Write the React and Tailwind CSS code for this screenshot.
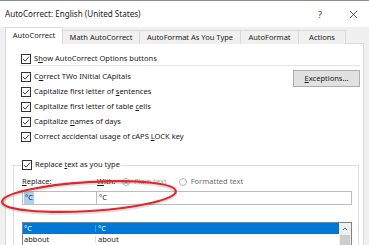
import React from "react";

function Check() {
  return (
    <span className="flex h-[10px] w-[10px] shrink-0 items-center justify-center border border-[#333] bg-white">
      <svg viewBox="0 0 10 10" className="h-[8px] w-[8px]">
        <path d="M1.3 5.1 L3.9 7.7 L8.8 2.1" fill="none" stroke="#222" strokeWidth="1.1" />
      </svg>
    </span>
  );
}

function Row({ children }) {
  return (
    <div className="flex h-[15px] items-center gap-[3px]">
      <Check />
      <span className="whitespace-nowrap">{children}</span>
    </div>
  );
}

function Radio({ on, children, tone }) {
  return (
    <span className="flex items-center gap-[4px]">
      <span className="flex h-[8px] w-[8px] items-center justify-center rounded-full border border-[#b5b5b5] bg-white">
        {on && <span className="h-[4px] w-[4px] rounded-full bg-[#b5b5b5]" />}
      </span>
      <span className={tone}>{children}</span>
    </span>
  );
}

const tabs = [
  { label: "Math AutoCorrect", w: "w-[77px]" },
  { label: "AutoFormat As You Type", w: "w-[101px]" },
  { label: "AutoFormat", w: "w-[58px]" },
  { label: "Actions", w: "w-[47px]" },
];

export default function App() {
  return (
    <div className="relative h-[245px] w-[369px] overflow-hidden bg-[#f0f0f0] font-['Noto_Sans',sans-serif] text-[7.5px] leading-none text-[#1a1a1a]">
      {/* title bar */}
      <div className="flex h-[27px] items-center border-t border-[#8c8c8c] bg-white pl-[5px]">
        <span className="text-[8.1px] text-[#222]">AutoCorrect: English (United States)</span>
        <span className="ml-auto mr-[27px] text-[9px] text-[#333]">?</span>
        <svg viewBox="0 0 10 10" className="mr-[11px] h-[9px] w-[9px]">
          <path d="M1 1 L9 9 M9 1 L1 9" stroke="#333" strokeWidth="0.9" />
        </svg>
      </div>

      {/* tabs */}
      <div className="flex h-[17px] items-end pl-[5px]">
        <div className="relative z-10 flex h-[17px] w-[58px] items-center justify-center border-x border-t border-[#d9d9d9] bg-white pb-[1px]">
          AutoCorrect
        </div>
        {tabs.map((t) => (
          <div
            key={t.label}
            className={`flex h-[14px] ${t.w} items-center justify-center border-r border-t border-[#d9d9d9] bg-[#f0f0f0]`}
          >
            {t.label}
          </div>
        ))}
      </div>

      {/* panel */}
      <div className="ml-[5px] mt-[-1px] h-[230px] w-[359px] border border-[#d9d9d9] bg-white pl-[15px] pr-[3px] pt-[8px]">
        <div className="flex h-[13px] items-center gap-[3px]">
          <Check />
          <span>
            S<u>h</u>ow AutoCorrect Options buttons
          </span>
        </div>
        <div className="ml-[-1px] h-px bg-[#e3e3e3]" />

        <div className="mt-[3px] flex">
          <div className="flex-1">
            <Row>
              C<u>o</u>rrect TWo INitial CApitals
            </Row>
            <Row>
              Capitalize first letter of <u>s</u>entences
            </Row>
            <Row>
              Capitalize first letter of table <u>c</u>ells
            </Row>
            <Row>
              Capitalize <u>n</u>ames of days
            </Row>
            <Row>
              Correct accidental usage of cAPS <u>L</u>OCK key
            </Row>
          </div>
          <button className="mt-[1px] flex h-[17px] w-[67px] items-center justify-center border border-[#adadad] bg-[#e1e1e1] text-[7.5px]">
            <u>E</u>xceptions...
          </button>
        </div>

        <fieldset className="ml-[-8px] mr-[1px] mt-[16px] border border-[#dcdcdc] pb-[20px] pl-[8px] pr-[6px]">
          <legend className="ml-[-1px] flex h-[10px] items-center gap-[3px] px-[1px]">
            <Check />
            <span>
              Replace <u>t</u>ext as you type
            </span>
          </legend>

          <div className="mt-[6px] flex h-[12px] items-center">
            <span className="w-[75px]">
              <u>R</u>eplace:
            </span>
            <span className="w-[25px]">
              <u>W</u>ith:
            </span>
            <Radio on tone="text-[#a6a6a6]">Plain text</Radio>
            <span className="w-[12px]" />
            <Radio tone="text-[#6b6b6b]">Formatted text</Radio>
          </div>

          <div className="mt-[3px] flex h-[14px]">
            <div className="flex w-[75px] items-center border border-[#bdbdbd] pl-[1px]">
              <span className="bg-[#a9d1f4] px-[1px] py-[2px]">°C</span>
            </div>
            <div className="ml-[-1px] flex flex-1 items-center border border-[#bdbdbd] pl-[2px]">°C</div>
          </div>

          <div className="mt-[17px] flex h-[40px] border border-[#828282]">
            <div className="flex-1">
              <div className="flex h-[11px] items-center bg-[#0078d7] text-white">
                <span className="w-[73px] border-r border-[#3d98e0] pl-[1px]">°C</span>
                <span className="pl-[2px]">°C</span>
              </div>
              <div className="flex h-[11px] items-center">
                <span className="w-[73px] border-r border-[#e0e0e0] pl-[1px]">abbout</span>
                <span className="pl-[2px]">about</span>
              </div>
            </div>
            <div className="w-[12px] bg-[#f0f0f0]">
              <div className="flex h-[12px] items-center justify-center">
                <svg viewBox="0 0 8 8" className="h-[6px] w-[6px]">
                  <path d="M1 5.5 L4 2.5 L7 5.5" fill="none" stroke="#555" strokeWidth="1.2" />
                </svg>
              </div>
              <div className="mx-[1px] h-[20px] bg-[#cdcdcd]" />
            </div>
          </div>
        </fieldset>
      </div>

      {/* red annotation ellipse */}
      <svg className="pointer-events-none absolute left-0 top-0" width="369" height="245" viewBox="0 0 369 245">
        <ellipse cx="89" cy="198" rx="87" ry="14.5" transform="rotate(-3.5 89 198)" fill="none" stroke="#000" strokeOpacity="0.12" strokeWidth="3" />
        <ellipse cx="89" cy="196.5" rx="87" ry="14.5" transform="rotate(-3.5 89 196.5)" fill="none" stroke="#e3262c" strokeWidth="2.2" />
      </svg>
    </div>
  );
}
